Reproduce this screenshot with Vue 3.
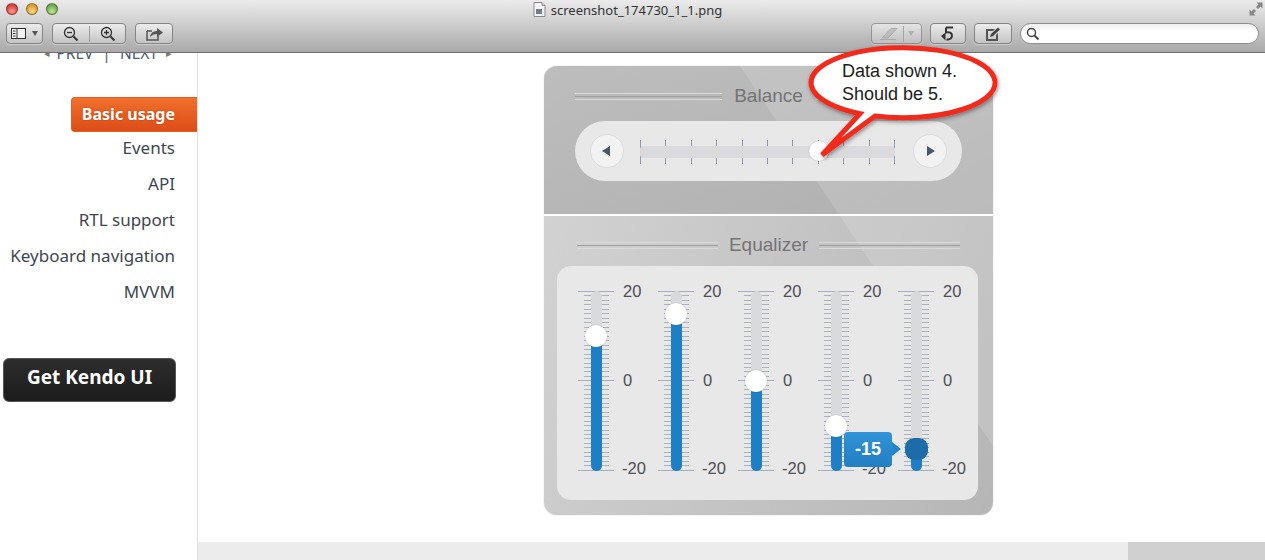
<template>
  <div class="window">
    <header class="toolbar">
      <div class="traffic">
        <span class="dot red"></span>
        <span class="dot yellow"></span>
        <span class="dot green"></span>
      </div>
      <div class="title">
        <svg width="13" height="15" viewBox="0 0 13 15">
          <path d="M1 .5h8l3 3v11H1z" fill="#f6f6f6" stroke="#8a8a8a" />
          <path d="M9 .5v3h3" fill="#ddd" stroke="#8a8a8a" />
          <rect x="3" y="7" width="6" height="5" fill="#6f7f92" />
        </svg>
        <span>screenshot_174730_1_1.png</span>
      </div>
      <svg class="resize" width="14" height="14" viewBox="0 0 14 14">
        <path d="M7.500 0.500h6v6l-2-2-2.500 2.500-2-2 2.500-2.500zM6.500 13.500h-6v-6l2 2 2.500-2.500 2 2-2.500 2.500z" fill="#858585" />
      </svg>
      <div class="tools">
        <div class="btn view-btn">
          <svg width="15" height="11" viewBox="0 0 15 11">
            <rect x=".5" y=".5" width="14" height="10" fill="#f2f2f2" stroke="#333" />
            <path d="M6 .5v10" stroke="#333" fill="none" />
            <path d="M2 3h2.500M2 5.500h2.500M2 8h2.500" stroke="#333" fill="none" />
          </svg>
          <i class="caret"></i>
        </div>
        <div class="btn zoom-btn">
          <svg width="16" height="16" viewBox="0 0 16 16" fill="none" stroke="#333">
            <circle cx="6.500" cy="6.500" r="5" stroke-width="1.300" />
            <path d="M4 6.500h5" stroke-width="1.300" />
            <path d="M10.500 10.500l4 4" stroke-width="2" />
          </svg>
          <span class="sep"></span>
          <svg width="16" height="16" viewBox="0 0 16 16" fill="none" stroke="#333">
            <circle cx="6.500" cy="6.500" r="5" stroke-width="1.300" />
            <path d="M4 6.500h5M6.500 4v5" stroke-width="1.300" />
            <path d="M10.500 10.500l4 4" stroke-width="2" />
          </svg>
        </div>
        <div class="btn share-btn">
          <svg width="17" height="14" viewBox="0 0 17 14">
            <path d="M1 4h5M12 9v4H1V4" fill="none" stroke="#555" stroke-width="1.500" />
            <path d="M4 10c.500-4 3.500-6 7-6V1l6 4.500L11 10V7c-3 0-5 1-7 3z" fill="#555" />
          </svg>
        </div>
        <div class="spacer"></div>
        <div class="tools-right">
          <div class="btn pen-btn">
            <svg width="20" height="14" viewBox="0 0 20 14">
              <path d="M1 12.500h16M3 11l9-9.500h6L9 11z" fill="#bbb" stroke="#a5a5a5" />
            </svg>
            <span class="sep"></span>
            <i class="caret light"></i>
          </div>
          <div class="btn undo-btn">
            <svg width="14" height="15" viewBox="0 0 14 15">
              <path d="M5 1.500h7M5 1.500v5c3.500-1 6 .500 6 3.300 0 2.500-2.500 4.200-5.500 3.700" fill="none" stroke="#333" stroke-width="2" />
              <path d="M0 10l4.500 4.500V6.500z" fill="#333" />
            </svg>
          </div>
          <div class="btn edit-btn">
            <svg width="16" height="14" viewBox="0 0 16 14">
              <path d="M1 2h9l-2 2H3v8h8V8l2-2v8H1z" fill="#555" />
              <path d="M5 10l1-3 7-6.500 2 2L8 9z" fill="#444" />
            </svg>
          </div>
          <div class="search">
            <svg width="14" height="14" viewBox="0 0 14 14" fill="none" stroke="#444">
              <circle cx="5.500" cy="5.500" r="4" stroke-width="1.500" />
              <path d="M8.500 8.500l4 4" stroke-width="2" />
            </svg>
          </div>
        </div>
      </div>
    </header>

    <div class="page">
      <aside class="sidebar">
        <div class="pager">
          <span class="arrow first">◂</span>
          <span>PREV</span>
          <span>|</span>
          <span>NEXT</span>
          <span class="arrow last">▸</span>
        </div>
        <nav class="nav">
          <a v-for="item in navItems" :key="item" class="nav-item" :class="{ active: item === 'Basic usage' }">{{ item }}</a>
        </nav>
        <a class="get-kendo">Get Kendo UI</a>
      </aside>

      <main class="main">
        <div class="canvas">
          <section class="panel">
            <div class="balance">
              <div class="heading"><span class="rule"></span><h3>Balance</h3><span class="rule"></span></div>
              <div class="pill">
                <button class="round-btn"><i class="tri left"></i></button>
                <div class="h-slider">
                  <div class="h-ticks">
                    <span v-for="n in 11" :key="n" class="h-tick"></span>
                  </div>
                  <div class="h-track"></div>
                  <span class="h-handle"></span>
                </div>
                <button class="round-btn"><i class="tri right"></i></button>
              </div>
            </div>
            <div class="equalizer">
              <div class="heading eq-heading"><span class="rule"></span><h3>Equalizer</h3><span class="rule"></span></div>
              <div class="eq-card">
                <div v-for="(band, i) in bands" :key="i" class="eq-col">
                  <div class="v-slider">
                    <div class="v-ticks">
                      <span v-for="t in 41" :key="t" class="v-tick" :class="{ major: (t - 1) % 20 === 0 }"></span>
                    </div>
                    <div class="v-track"></div>
                    <div class="v-fill" :style="{ top: handleTop(band.value) + 'px' }"></div>
                    <span class="v-handle" :class="{ active: band.active }" :style="{ top: handleTop(band.value) + 'px' }"></span>
                    <div v-if="band.active" class="tip">{{ band.value }}</div>
                  </div>
                  <div class="scale">
                    <span>20</span>
                    <span>0</span>
                    <span>-20</span>
                  </div>
                </div>
              </div>
            </div>
          </section>
        </div>
        <div class="footer"><span class="footer-end"></span></div>
      </main>
    </div>

    <!-- annotation drawn over the screenshot -->
    <div class="callout">
      <svg width="210" height="125" viewBox="0 0 210 125">
        <defs>
          <filter id="soft" x="-10%" y="-10%" width="120%" height="125%">
            <feDropShadow dx="1" dy="2" stdDeviation="2" flood-color="#000" flood-opacity=".4" />
          </filter>
        </defs>
        <path
          d="M75 73 A92 35 0 1 0 60 70.600 L22 112 Z"
          fill="#fff"
          stroke="#f12b1f"
          stroke-width="5"
          stroke-linejoin="miter"
          filter="url(#soft)"
        />
      </svg>
      <p class="callout-text">Data shown 4.<br />Should be 5.</p>
    </div>
  </div>
</template>

<script setup>
const navItems = ['Basic usage', 'Events', 'API', 'RTL support', 'Keyboard navigation', 'MVVM']

const bands = [
  { value: 10 },
  { value: 15 },
  { value: 0 },
  { value: -10 },
  { value: -15, active: true }
]

// slider runs 20..-20 over 180px
function handleTop(value) {
  return 90 - value * 4.5
}
</script>

<style>
html,
body {
  margin: 0;
  background: #fff;
}
</style>

<style scoped>
.window {
  position: relative;
  width: 1265px;
  height: 560px;
  overflow: hidden;
  display: flex;
  flex-direction: column;
  background: #fff;
  font-family: "Liberation Sans", Arial, sans-serif;
}

/* toolbar */
.toolbar {
  position: relative;
  flex: none;
  box-sizing: border-box;
  height: 53px;
  border-bottom: 1px solid #6f6f6f;
  background: linear-gradient(#ebebeb, #d5d5d5 35%, #a9a9a9);
}

.traffic {
  position: absolute;
  left: 6px;
  top: 3px;
  display: flex;
  gap: 8px;
}

.dot {
  box-sizing: border-box;
  width: 12px;
  height: 12px;
  border-radius: 50%;
  border: 0.5px solid rgba(0, 0, 0, 0.35);
}

.dot.red {
  background: radial-gradient(circle at 50% 75%, #ff9a93, #d8403a 70%);
}

.dot.yellow {
  background: radial-gradient(circle at 50% 75%, #ffdc8a, #d99a2c 70%);
}

.dot.green {
  background: radial-gradient(circle at 50% 75%, #bfe89a, #6fa84a 70%);
}

.title {
  display: flex;
  justify-content: center;
  align-items: center;
  gap: 5px;
  height: 17px;
  padding-right: 10px;
  padding-top: 1px;
  font-family: "Noto Sans", sans-serif;
  font-size: 13px;
  color: #333;
}

.resize {
  position: absolute;
  right: 2px;
  top: 2px;
}

.tools {
  display: flex;
  align-items: center;
  padding: 5px 6px 0 6px;
  gap: 9px;
}

.tools-right {
  display: flex;
  align-items: center;
  gap: 8px;
}

.btn {
  box-sizing: border-box;
  height: 21px;
  display: flex;
  align-items: center;
  justify-content: center;
  border: 1px solid #858585;
  border-radius: 4px;
  background: linear-gradient(#ececec, #c4c4c4);
  box-shadow: 0 1px 0 rgba(255, 255, 255, 0.35);
}

.view-btn {
  width: 37px;
  gap: 6px;
}

.zoom-btn {
  width: 74px;
  gap: 10px;
}

.share-btn {
  width: 38px;
}

.spacer {
  flex: 1;
}

.pen-btn {
  width: 51px;
  gap: 4px;
  opacity: 0.75;
}

.undo-btn {
  width: 36px;
}

.edit-btn {
  width: 38px;
}

.search {
  box-sizing: border-box;
  width: 239px;
  height: 21px;
  padding-left: 5px;
  display: flex;
  align-items: center;
  border: 1px solid #8e8e8e;
  border-radius: 11px;
  background: linear-gradient(#efefef, #fff 40%);
}

.sep {
  width: 1px;
  height: 16px;
  background: #9c9c9c;
}

.caret {
  width: 0;
  height: 0;
  border-left: 3.500px solid transparent;
  border-right: 3.500px solid transparent;
  border-top: 5px solid #555;
}

.caret.light {
  border-top-color: #aaa;
}

/* page */
.page {
  flex: 1;
  min-height: 0;
  display: flex;
}

.sidebar {
  flex: none;
  box-sizing: border-box;
  width: 198px;
  border-right: 1px solid #e0e0e0;
  overflow: hidden;
  font-family: "Noto Sans", sans-serif;
}

.pager {
  margin-top: -10px;
  height: 20px;
  line-height: 20px;
  display: flex;
  justify-content: flex-end;
  gap: 9px;
  padding-right: 25px;
  font-size: 15.500px;
  color: #4c5c72;
}

.pager .arrow {
  font-size: 11px;
  color: #777;
}

.pager .arrow.first {
  margin-right: -3px;
}

.pager .arrow.last {
  margin-left: -1px;
}

.nav {
  margin-top: 34px;
  display: flex;
  flex-direction: column;
  align-items: flex-end;
}

.nav-item {
  height: 36px;
  line-height: 36px;
  padding-right: 22px;
  font-size: 17px;
  color: #3d4650;
  white-space: nowrap;
}

.nav-item.active {
  box-sizing: border-box;
  height: 35px;
  margin-bottom: -2px;
  line-height: 32px;
  padding-left: 10px;
  font-size: 16px;
  font-weight: 700;
  color: #fff;
  text-shadow: 0 0 2px rgba(150, 50, 0, 0.6);
  border: 1px solid #ea5a1e;
  border-right: 0;
  border-radius: 4px 0 0 4px;
  background: linear-gradient(#f0702c, #dc4d18);
}

.get-kendo {
  display: block;
  box-sizing: border-box;
  width: 173px;
  height: 44px;
  margin: 48px 0 0 3px;
  line-height: 37px;
  text-align: center;
  font-size: 19px;
  font-weight: 700;
  color: #fff;
  border: 1px solid #555;
  border-radius: 6px;
  background: linear-gradient(#2d2d2d, #1c1c1c);
}

.main {
  flex: 1;
  min-width: 0;
  display: flex;
  flex-direction: column;
}

.canvas {
  flex: 1;
  padding: 13px 0 0 346px;
}

.footer {
  flex: none;
  height: 18px;
  display: flex;
  justify-content: flex-end;
  background: #ececec;
}

.footer-end {
  width: 137px;
  background: #d0d0d0;
}

/* demo panel */
.panel {
  position: relative;
  width: 449px;
  height: 449px;
  border-radius: 13px;
  overflow: hidden;
  display: flex;
  flex-direction: column;
  gap: 2px;
  background: #fff;
  box-shadow: 0 0 1px rgba(0, 0, 0, 0.4);
}

/* the lighter wedge across the panel */
.panel::after {
  content: "";
  position: absolute;
  inset: 0;
  clip-path: polygon(196px 0, 449px 0, 449px 380px);
  background: rgba(255, 255, 255, 0.14);
  pointer-events: none;
}

.balance {
  box-sizing: border-box;
  height: 148px;
  padding: 18px 31px 0;
  background: linear-gradient(160deg, #bdbdbd, #b0b0b0);
}

.equalizer {
  flex: 1;
  padding: 17px 15px 0 13px;
  background: linear-gradient(110deg, #d2d2d2, #b6b6b6);
}

.heading {
  position: relative;
  z-index: 1;
  display: flex;
  align-items: center;
  gap: 12px;
  height: 24px;
}

.eq-heading {
  margin: 0 18px 0 20px;
  gap: 11px;
}

.heading h3 {
  margin: 0;
  font-size: 19px;
  font-weight: 400;
  color: #747474;
}

.rule {
  flex: 1;
  height: 7px;
  box-sizing: border-box;
  border-top: 1px solid #dadada;
  border-bottom: 1px solid #dadada;
  background: linear-gradient(#a0a0a0, #a0a0a0) center / 100% 1px no-repeat;
}

.pill {
  position: relative;
  z-index: 1;
  box-sizing: border-box;
  height: 60px;
  margin-top: 13px;
  padding: 0 15px;
  display: flex;
  align-items: center;
  justify-content: space-between;
  border-radius: 30px;
  background: #e8e8e8;
}

.round-btn {
  width: 34px;
  height: 34px;
  padding: 0;
  display: flex;
  align-items: center;
  justify-content: center;
  border: 1px solid #dcdcdc;
  border-radius: 50%;
  background: #f2f2f2;
}

.tri {
  width: 0;
  height: 0;
  border-top: 5px solid transparent;
  border-bottom: 5px solid transparent;
}

.tri.left {
  border-right: 8px solid #46586c;
  margin-right: 2px;
}

.tri.right {
  border-left: 8px solid #46586c;
  margin-left: 2px;
}

.h-slider {
  position: relative;
  width: 255px;
  height: 24px;
  margin: 1px 2px 0 0;
}

.h-ticks {
  position: absolute;
  inset: 0;
  display: flex;
  justify-content: space-between;
}

.h-tick {
  width: 1px;
  background: #8e9cad;
}

.h-track {
  position: absolute;
  left: 0;
  right: 0;
  top: 6px;
  height: 12px;
  border-radius: 4px;
  background: #dadadd;
}

.h-handle {
  position: absolute;
  left: 169px;
  top: 1px;
  width: 20px;
  height: 20px;
  border-radius: 50%;
  background: #fff;
  box-shadow: 0 0 1px rgba(0, 0, 0, 0.3);
}

.eq-card {
  position: relative;
  z-index: 2;
  box-sizing: border-box;
  height: 234px;
  margin-top: 9px;
  padding-top: 25px;
  display: flex;
  border-radius: 14px;
  background: #e8e8e8;
}

.eq-col {
  flex: none;
  width: 80px;
  display: flex;
  padding-left: 21px;
  box-sizing: border-box;
}

.v-slider {
  position: relative;
  flex: none;
  width: 36px;
  height: 180px;
}

.v-ticks {
  position: absolute;
  inset: 0;
  display: flex;
  flex-direction: column;
  justify-content: space-between;
  align-items: center;
}

.v-tick {
  width: 25px;
  height: 1px;
  background: #a9b2c0;
}

.v-tick.major {
  width: 36px;
  background: #a6aebc;
}

.v-track {
  position: absolute;
  left: 12.500px;
  top: 0;
  bottom: 0;
  width: 11px;
  border-radius: 6px;
  background: #dadadc;
}

.v-fill {
  position: absolute;
  left: 12.500px;
  bottom: 0;
  width: 11px;
  border-radius: 0 0 6px 6px;
  background: #1e7fc6;
}

.v-handle {
  position: absolute;
  left: 7px;
  width: 22px;
  height: 22px;
  margin-top: -11px;
  border-radius: 50%;
  background: #fff;
  box-shadow: 0 0 1px rgba(0, 0, 0, 0.35);
}

.v-handle.active {
  left: 7px;
  width: 23px;
  height: 22px;
  border-radius: 9px;
  background: #1b6ca8;
  box-shadow: none;
}

.tip {
  position: absolute;
  z-index: 2;
  left: -54px;
  top: 141px;
  box-sizing: border-box;
  width: 48px;
  height: 35px;
  line-height: 34px;
  text-align: center;
  font-size: 18px;
  font-weight: 700;
  color: #fff;
  border-radius: 4px;
  background: linear-gradient(#3293d6, #217fc2);
}

.tip::after {
  content: "";
  position: absolute;
  left: 100%;
  top: 10px;
  border-top: 7px solid transparent;
  border-bottom: 7px solid transparent;
  border-left: 9px solid #2585c8;
}

.scale {
  height: 198px;
  margin: -9px 0 0 9px;
  display: flex;
  flex-direction: column;
  justify-content: space-between;
  font-size: 16.500px;
  line-height: 18px;
  color: #4c4f55;
}

.scale span:last-child {
  margin-left: -1px;
  margin-bottom: 3px;
}

/* annotation */
.callout {
  position: absolute;
  z-index: 5;
  left: 800px;
  top: 43px;
  width: 210px;
  height: 125px;
}

.callout svg {
  display: block;
}

.callout-text {
  position: absolute;
  left: 42px;
  top: 17px;
  margin: 0;
  font-size: 18px;
  line-height: 23px;
  color: #1c1c1c;
  white-space: nowrap;
}
</style>
